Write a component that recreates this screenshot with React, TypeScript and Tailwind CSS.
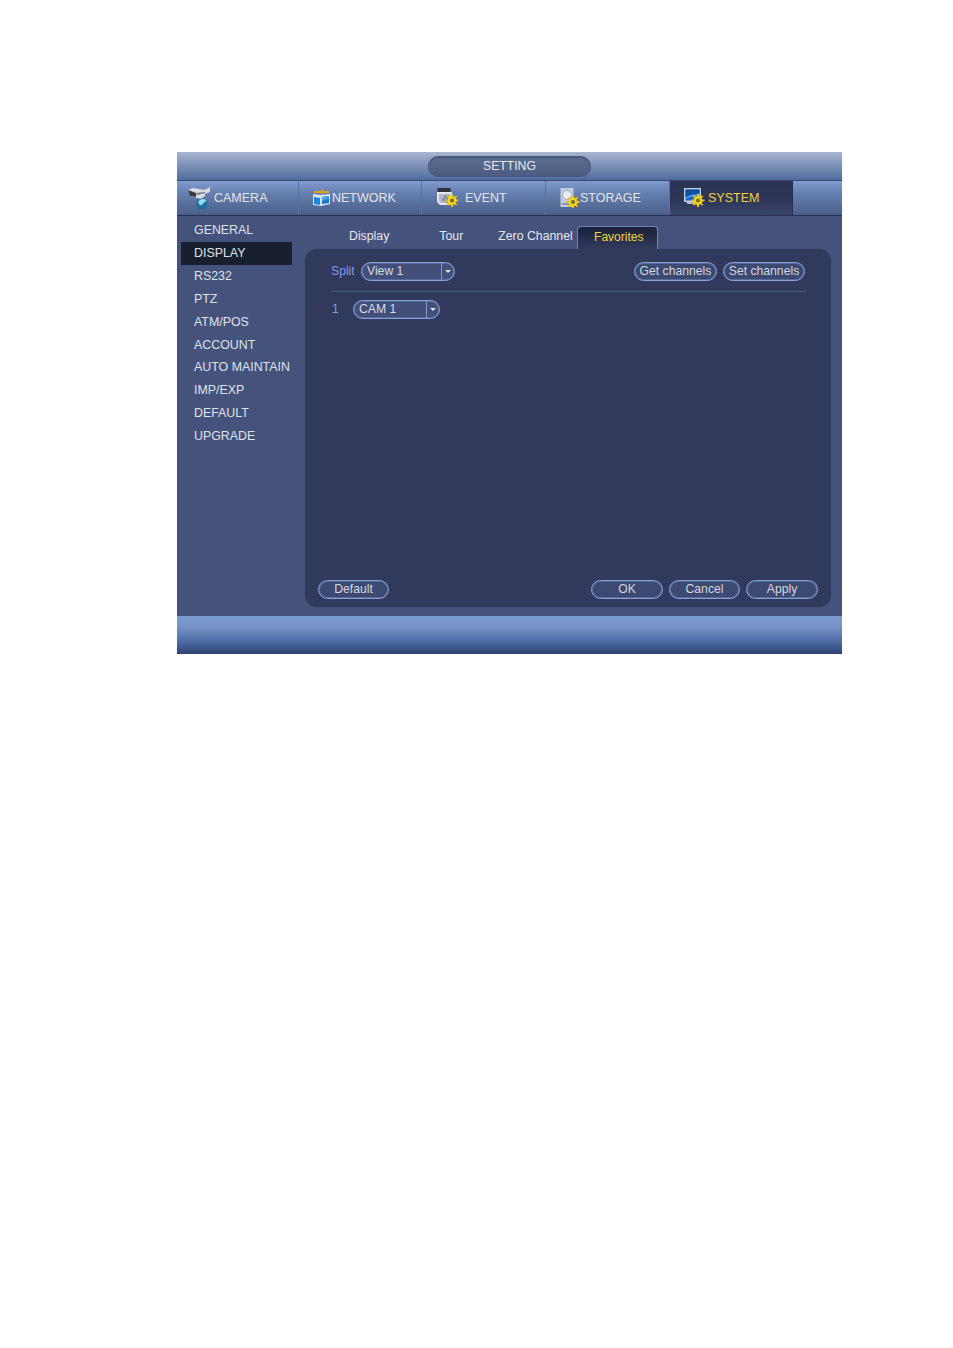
import type { ReactNode } from "react";

function Gear({ x, y }: { x: number; y: number }) {
    return (
        <g transform={`translate(${x} ${y})`}>
            <path d="M0-6.5V6.5M-6.5 0H6.5M-4.6-4.6L4.6 4.6M-4.6 4.6L4.6-4.6" stroke="#e8bd10" strokeWidth="2" />
            <circle r="4.4" fill="#f7d414" />
            <circle r="2" fill="#6f6a3a" />
        </g>
    );
}

function CameraIcon() {
    return (
        <svg width="24" height="23" viewBox="0 0 24 23" className="shrink-0">
            <path d="M17 3L23 0V5L18 7Z" fill="#d6d8dc" />
            <path d="M1 3L6 1L18 3L18 9L14 12L3 9Z" fill="#d9dbdf" />
            <path d="M1 3L3 9L9 10L9 6Z" fill="#34363c" />
            <path d="M9 6L18 5V6L10 8Z" fill="#74777f" />
            <circle cx="15" cy="17" r="5.5" fill="#1b6f9f" />
            <path d="M11 15C13 12 16 11 19 13C19 16 16 15 15 18C13 19 12 17 11 15Z" fill="#8fe0e8" />
        </svg>
    );
}

function NetworkIcon() {
    return (
        <svg width="20" height="18" viewBox="0 0 20 18" className="shrink-0">
            <path d="M2 3H17" stroke="#d9a520" strokeWidth="2" />
            <path d="M10 0V5" stroke="#c79a20" strokeWidth="2" />
            <path d="M1 5L9 6V17L1 16Z" fill="#d9e6f2" />
            <path d="M2 8L8 9V16L2 15Z" fill="#1c86d8" />
            <path d="M9 6L18 5V15L9 17Z" fill="#d9e6f2" />
            <path d="M10 8L17 7V14L10 15Z" fill="#1578cc" />
            <path d="M10 8L17 7V9L10 12Z" fill="#4aa8ea" />
        </svg>
    );
}

function EventIcon() {
    return (
        <svg width="22" height="20" viewBox="0 0 22 20" className="shrink-0">
            <rect x="0.5" y="0" width="13" height="4" fill="#2e3036" />
            <path d="M0 4H15V17H3L0 14Z" fill="#e3e6ee" />
            <path d="M2 6H13V15H4L2 13Z" fill="#aeb7ca" />
            <path d="M9 7L6 12H11M10 8V15" stroke="#6c7894" strokeWidth="1.2" fill="none" />
            <Gear x={15} y={12.5} />
        </svg>
    );
}

function StorageIcon() {
    return (
        <svg width="20" height="20" viewBox="0 0 20 20" className="shrink-0">
            <rect x="0.5" y="0" width="13" height="19" fill="#c3cbdb" />
            <circle cx="7" cy="7" r="4.5" fill="#e9ecf2" stroke="#a8afc0" />
            <path d="M2 16H9" stroke="#8c95a9" strokeWidth="2" />
            <Gear x={13} y={14} />
        </svg>
    );
}

function SystemIcon() {
    return (
        <svg width="21" height="20" viewBox="0 0 21 20" className="shrink-0">
            <rect x="0" y="0" width="17" height="14" fill="#c6cfe0" />
            <rect x="1.5" y="1.5" width="14" height="11" fill="#1668c8" />
            <path d="M1.5 9C6 6 10 6 15.5 5V1.5H1.5Z" fill="#0f4f9f" />
            <path d="M1.5 11C6 8 10 8 15.5 7V6C10 7 6 7 1.5 10Z" fill="#7fc0f4" />
            <path d="M3 14H12V16H3Z" fill="#b6bdcc" />
            <Gear x={14} y={12.5} />
        </svg>
    );
}

function TopTab({ icon, label, cls, active }: { icon: ReactNode; label: string; cls: string; active?: boolean }) {
    return (
        <div
            className={`flex items-center h-full border-r ${cls} ${
                active
                    ? "text-[#f3d23a] border-[#27304f] bg-[linear-gradient(#2b3355,#2d3657_55%,#3a466c)]"
                    : "text-[#e2e5ec] border-[#5b6f98]"
            }`}
        >
            {icon}
            <span>{label}</span>
        </div>
    );
}

function Btn({ label, w }: { label: string; w: string }) {
    return (
        <div
            className={`${w} h-[19px] flex items-center justify-center rounded-full border border-[#86a2d8] bg-[#3c4971] text-[12.2px] text-[#d4d7df] shadow-[inset_0_0_0_1px_#56699a]`}
        >
            {label}
        </div>
    );
}

function Select({ label, w }: { label: string; w: string }) {
    return (
        <div className={`${w} h-[19px] flex items-center rounded-full border border-[#86a2d8] bg-[#424f78] text-[12.2px] text-[#d8dbe3] shadow-[inset_0_0_0_1px_#56699a]`}>
            <span className="flex-1 pl-[5px]">{label}</span>
            <span className="w-[13px] h-full flex items-center justify-center border-l border-[#7f9bd0]">
                <span className="w-0 h-0 border-x-[3.5px] border-x-transparent border-t-[3.5px] border-t-[#e4e7ee]" />
            </span>
        </div>
    );
}

const menu = ["GENERAL", "DISPLAY", "RS232", "PTZ", "ATM/POS", "ACCOUNT", "AUTO MAINTAIN", "IMP/EXP", "DEFAULT", "UPGRADE"];

export default function App() {
    return (
        <div className="w-[953px] h-[1348px] bg-white pt-[152px] pl-[177px] font-['Liberation_Sans',Arial,sans-serif]">
            <div className="w-[665px] h-[502px] flex flex-col bg-[#44527c] overflow-hidden">
                <div className="h-[29px] shrink-0 flex items-center justify-center border-b border-[#3a4a72] bg-[linear-gradient(#a9b7cf,#7f94b9_45%,#506c9c)]">
                    <div className="w-[163px] h-[21px] flex items-center justify-center rounded-[10px] border border-[#465a82] bg-[linear-gradient(#5c6c8e,#4d5d82)] text-[12.2px] text-[#e8eaf0] shadow-[inset_0_1px_0_#45557a]">
                        SETTING
                    </div>
                </div>
                <div className="h-[35px] shrink-0 flex border-b border-[#27304f] text-[12.5px] bg-[linear-gradient(#7f9ccf,#6580b0_35%,#4b5f88)]">
                    <TopTab icon={<CameraIcon />} label="CAMERA" cls="w-[122px] gap-[3px] pl-[10px]" />
                    <TopTab icon={<NetworkIcon />} label="NETWORK" cls="w-[123px] pl-[13px]" />
                    <TopTab icon={<EventIcon />} label="EVENT" cls="w-[124px] gap-[6px] pl-[15px]" />
                    <TopTab icon={<StorageIcon />} label="STORAGE" cls="w-[124px] pl-[14px]" />
                    <TopTab icon={<SystemIcon />} label="SYSTEM" cls="w-[123px] gap-[3px] pl-[14px]" active />
                </div>
                <div className="flex-1 flex">
                    <div className="w-[128px] shrink-0 pl-[4px] pt-[3px]">
                        {menu.map((m) => (
                            <div
                                key={m}
                                className={`h-[22.9px] w-[111px] pl-[13px] flex items-center text-[12.4px] whitespace-nowrap text-[#dfe2ea] ${
                                    m === "DISPLAY" ? "bg-[#18202f]" : ""
                                }`}
                            >
                                {m}
                            </div>
                        ))}
                    </div>
                    <div className="w-[526px] flex flex-col">
                        <div className="h-[33px] shrink-0 flex items-end text-[12.3px] text-[#e6e8ee]">
                            <span className="ml-[44px] mb-[4px]">Display</span>
                            <span className="ml-[50px] mb-[4px]">Tour</span>
                            <span className="ml-[35px] mb-[4px]">Zero Channel</span>
                            <div className="ml-[4px] w-[81px] h-[23px] pl-[3px] pb-[2px] flex items-center justify-center rounded-t-[4px] border border-b-0 border-[#6f86b4] bg-[linear-gradient(#1a2238,#313a5c)] text-[12px] text-[#f3d23a]">
                                Favorites
                            </div>
                        </div>
                        <div className="h-[358px] flex flex-col rounded-[11px] bg-[#313a5c] pl-[26px] pr-[13px] pb-[8px]">
                            <div className="flex items-center mt-[13px] h-[19px]">
                                <span className="w-[30px] text-[12.2px] text-[#7f9cee]">Split</span>
                                <Select label="View 1" w="w-[94px]" />
                                <div className="ml-auto mr-[13px] flex gap-[6px]">
                                    <Btn label="Get channels" w="w-[83px]" />
                                    <Btn label="Set channels" w="w-[82px]" />
                                </div>
                            </div>
                            <div className="mt-[10px] mr-[11px] h-px bg-[#4c5a7e]" />
                            <div className="flex items-center mt-[8px] h-[19px]">
                                <span className="w-[22px] pl-[1px] text-[12.2px] text-[#7f9cee]">1</span>
                                <Select label="CAM 1" w="w-[87px]" />
                            </div>
                            <div className="mt-auto -ml-[13px] flex gap-[6px]">
                                <Btn label="Default" w="w-[71px] mr-[196px]" />
                                <Btn label="OK" w="w-[72px]" />
                                <Btn label="Cancel" w="w-[71px]" />
                                <Btn label="Apply" w="w-[72px]" />
                            </div>
                        </div>
                    </div>
                </div>
                <div className="h-[38px] shrink-0 bg-[linear-gradient(#7b9bcf,#7592c6_30%,#506fa8_65%,#2f4270)]" />
            </div>
        </div>
    );
}
